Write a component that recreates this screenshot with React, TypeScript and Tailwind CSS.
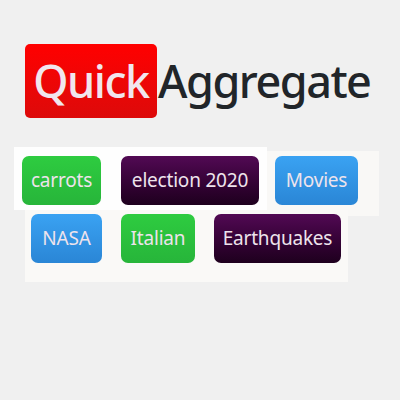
const tags = {
  green: "bg-gradient-to-b from-[#2ecc40] to-[#27b53a]",
  purple: "bg-gradient-to-b from-[#520a54] to-[#1e001e]",
  blue: "bg-gradient-to-b from-[#3aa2f2] to-[#2a86d6]",
};

function Tag({ label, color, w }: { label: string; color: string; w: string }) {
  return (
    <div
      className={`${color} ${w} h-[49px] rounded-[7px] flex items-center justify-center text-[19px] tracking-[-0.2px] text-[#eee3ec]`}
    >
      {label}
    </div>
  );
}

export default function App() {
  return (
    <div className="w-[400px] h-[400px] bg-[#f0f0f0] font-['Noto_Sans',sans-serif] overflow-hidden">
      <div className="pt-[44px] pl-[25px] flex items-center">
        <div className="h-[74px] w-[132px] rounded-[5px] bg-gradient-to-b from-[#ff0000] to-[#dd0a0a] flex items-center justify-center text-[45px] font-medium text-[#f1e6ee] tracking-[-1.5px]">
          Quick
        </div>
        <div className="text-[45px] font-medium text-[#212529] tracking-[-1.5px] ml-[1px]">Aggregate</div>
      </div>

      <div className="mt-[29px] flex h-[63px]">
        <div className="ml-[14px] w-[253px] h-[63px] bg-[#fefefe] flex items-start pt-[9px] pl-[8px] gap-[20px]">
          <Tag label="carrots" color={tags.green} w="w-[79px]" />
          <Tag label="election 2020" color={tags.purple} w="w-[138px]" />
        </div>
        <div className="mt-[4px] w-[112px] h-[65px] bg-[#f9f8f6] pt-[5px] pl-[8px]">
          <Tag label="Movies" color={tags.blue} w="w-[83px]" />
        </div>
      </div>

      <div className="relative ml-[25px] w-[323px] h-[72px] bg-[#faf9f7] flex items-start pt-[4px] pl-[6px] gap-[19px]">
        <Tag label="NASA" color={tags.blue} w="w-[71px]" />
        <Tag label="Italian" color={tags.green} w="w-[74px]" />
        <Tag label="Earthquakes" color={tags.purple} w="w-[127px]" />
      </div>
    </div>
  );
}
